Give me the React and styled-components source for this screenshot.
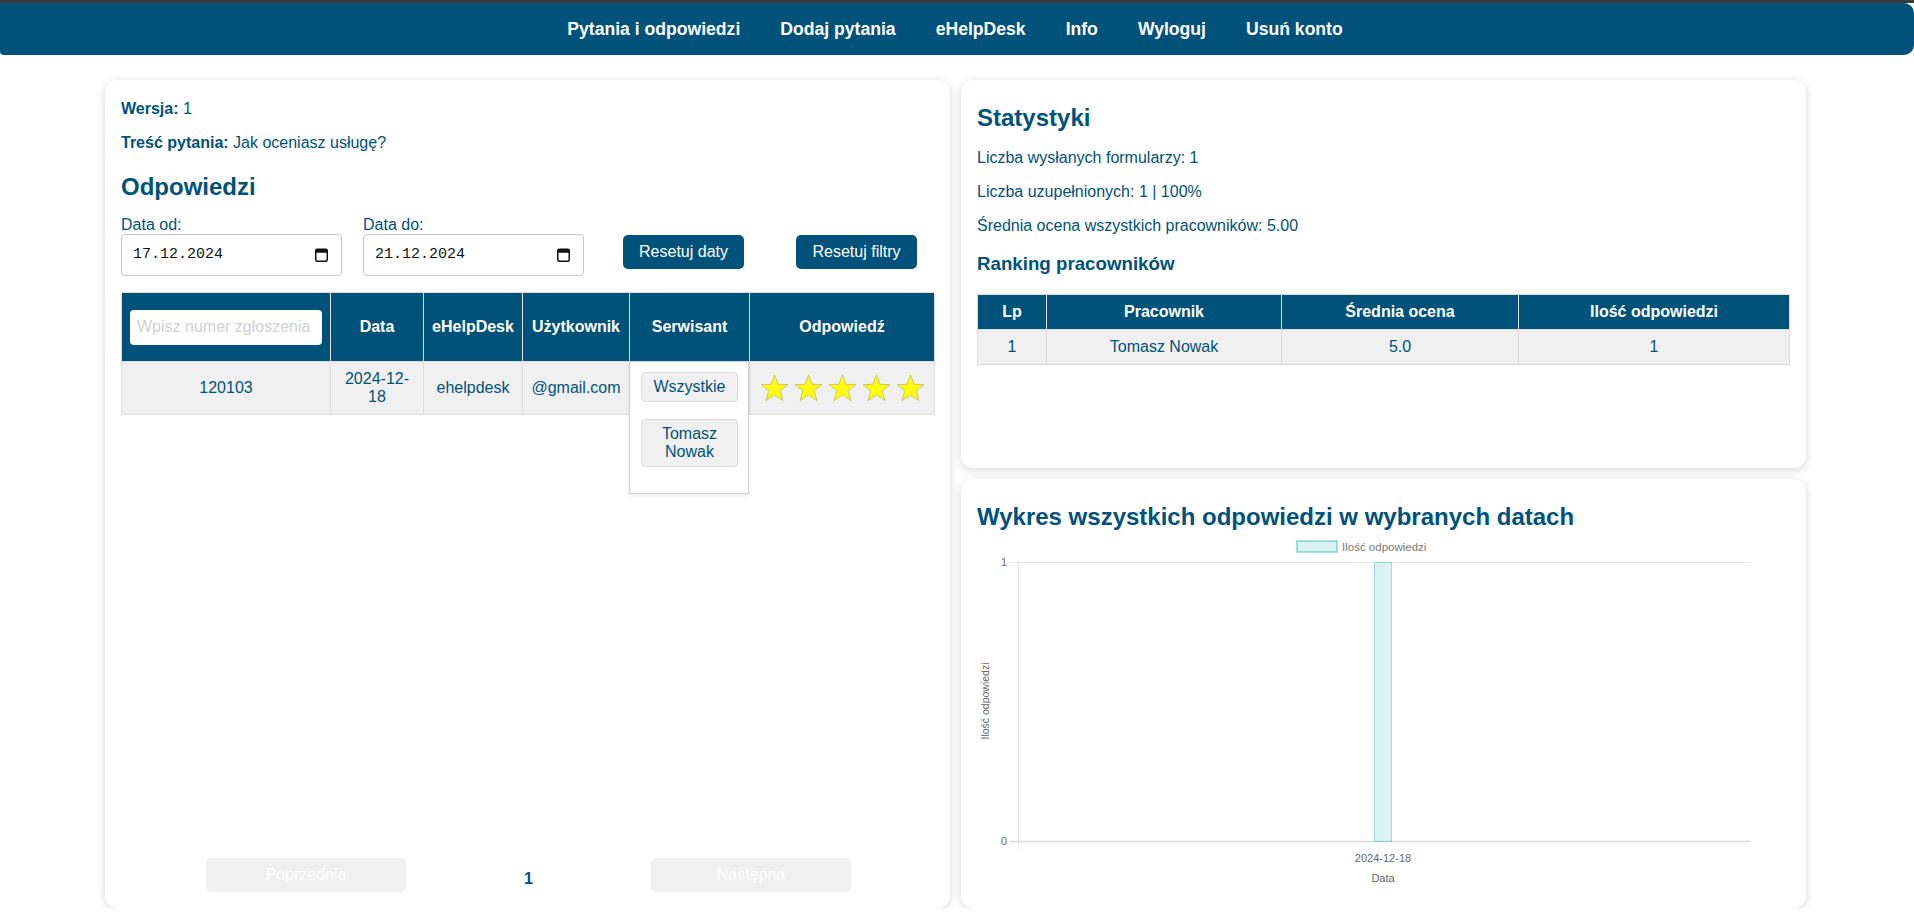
import React from "react";
import styled, { createGlobalStyle } from "styled-components";

const BLUE = "#00527a";

const GlobalStyle = createGlobalStyle`
  body {
    margin: 0;
    background: #fff;
    font-family: "Liberation Sans", Arial, sans-serif;
    color: ${BLUE};
  }
`;

const TopStrip = styled.div`
  height: 3px;
  background: #3b3b3b;
`;

const Nav = styled.nav`
  height: 52px;
  background: ${BLUE};
  border-radius: 0 10px 10px 4px;
  display: flex;
  align-items: center;
  justify-content: center;
  gap: 40px;
  padding-right: 4px;
`;

const NavItem = styled.a`
  color: #fff;
  font-size: 17.6px;
  font-weight: bold;
  text-decoration: none;
  cursor: pointer;
`;

const Main = styled.main`
  display: grid;
  grid-template-columns: 845px 845px;
  column-gap: 11px;
  margin: 25px 0 0 105px;
`;

const Card = styled.section`
  background: #fff;
  border-radius: 12px;
  box-shadow: 0 2px 8px rgba(0, 0, 0, 0.16);
  padding: ${(p) => p.$pad || "16px"};
  box-sizing: border-box;
  height: ${(p) => p.$h}px;
  display: flex;
  flex-direction: column;
`;

const RightCol = styled.div`
  display: flex;
  flex-direction: column;
  gap: 11px;
`;

const Line = styled.p`
  margin: ${(p) => p.$m || "0 0 16px"};
  font-size: 16px;
  line-height: 18px;
`;

const Title = styled.h2`
  font-size: 24px;
  margin: ${(p) => p.$m || "8px 0 17px"};
  line-height: 28px;
`;

const Sub = styled.h3`
  font-size: 18.72px;
  margin: 18px 0 19px;
  line-height: 22px;
`;

const FilterRow = styled.div`
  display: flex;
  align-items: flex-end;
  gap: 21px;
`;

const Field = styled.label`
  display: flex;
  flex-direction: column;
  font-size: 16px;
  line-height: 18px;
`;

const DateBox = styled.div`
  width: 221px;
  height: 42px;
  box-sizing: border-box;
  border: 1px solid #c8c8c8;
  border-radius: 4px;
  display: flex;
  align-items: center;
  justify-content: space-between;
  padding: 0 13px 0 11px;
  font-family: "Liberation Mono", "DejaVu Sans Mono", monospace;
  font-size: 15px;
  color: #111;
`;

const Btn = styled.button`
  background: ${BLUE};
  color: #fff;
  border: none;
  border-radius: 5px;
  height: 34px;
  width: 121px;
  font-family: inherit;
  font-size: 16px;
  margin: 0 0 7px ${(p) => p.$ml || 0}px;
  cursor: pointer;
`;

const Table = styled.table`
  border-collapse: collapse;
  table-layout: fixed;
  width: ${(p) => p.$w}px;
  margin-top: ${(p) => p.$mt || 0}px;
  font-size: 16px;
  text-align: center;
`;

const Th = styled.th`
  background: ${BLUE};
  color: #fff;
  border: 1px solid #ddd;
  height: ${(p) => p.$h}px;
  padding: 0 8px;
  box-sizing: border-box;
  position: relative;
  font-weight: bold;
`;

const Td = styled.td`
  background: #f0f0f0;
  border: 1px solid #ddd;
  height: ${(p) => p.$h}px;
  padding: 0 8px;
  box-sizing: border-box;
  line-height: 18px;
  color: ${BLUE};
`;

const Search = styled.input`
  width: 192px;
  height: 35px;
  box-sizing: border-box;
  border: none;
  border-radius: 4px;
  padding: 0 7px;
  font-family: inherit;
  font-size: 16px;
  display: block;
  &::placeholder {
    color: #d0d0d0;
  }
`;

const Dropdown = styled.div`
  position: absolute;
  top: 100%;
  left: -1px;
  width: 120px;
  box-sizing: border-box;
  background: #fff;
  border: 1px solid #d0d0d0;
  box-shadow: 0 2px 4px rgba(0, 0, 0, 0.08);
  padding: 10px 11px 26px;
  display: flex;
  flex-direction: column;
  gap: 17px;
  z-index: 5;
`;

const Option = styled.button`
  width: 97px;
  background: #f0f0f0;
  border: 1px solid #ddd;
  border-radius: 4px;
  padding: 5px 10px;
  font-family: inherit;
  font-size: 16px;
  line-height: 18px;
  color: ${BLUE};
  font-weight: normal;
`;

const Stars = styled.div`
  display: flex;
  gap: 5px;
  justify-content: center;
`;

const Pager = styled.div`
  margin-top: auto;
  display: flex;
  justify-content: center;
  align-items: center;
  gap: 118px;
  padding-left: 2px;
`;

const PageBtn = styled.button`
  width: 200px;
  height: 34px;
  background: #f0f0f0;
  color: #fff;
  border: none;
  border-radius: 5px;
  font-family: inherit;
  font-size: 16px;
`;

const PageNum = styled.span`
  font-weight: bold;
  font-size: 16px;
  margin-top: 8px;
`;

const Star = () => (
  <svg width="29" height="28" viewBox="0 0 29 28">
    <polygon
      points="14.5,1 18,10.3 28,10.6 20.2,16.8 23,26.6 14.5,21 6,26.6 8.8,16.8 1,10.6 11,10.3"
      fill="#ffff00"
      stroke="#c9c57a"
      strokeWidth="1"
    />
  </svg>
);

const CalendarIcon = () => (
  <svg width="13" height="14" viewBox="0 0 13 14">
    <rect x="0.75" y="1.25" width="11.5" height="12" rx="1.5" fill="none" stroke="#111" strokeWidth="1.5" />
    <rect x="0.75" y="1.25" width="11.5" height="3.5" fill="#111" />
  </svg>
);

const Chart = () => (
  <svg width="812" height="360" style={{ display: "block" }}>
    <rect x="320" y="6" width="40" height="11" fill="rgba(75,192,192,0.2)" stroke="rgba(75,192,192,0.5)" strokeWidth="2" />
    <text x="365" y="16" fontSize="11.5" fill="#777" fontFamily="Liberation Sans">Ilość odpowiedzi</text>
    <line x1="33" y1="27.5" x2="773" y2="27.5" stroke="#e6e6e6" />
    <line x1="41.5" y1="27" x2="41.5" y2="314" stroke="#e6e6e6" />
    <line x1="33" y1="306.5" x2="773" y2="306.5" stroke="#d8d8d8" strokeWidth="1.5" />
    <text x="30" y="31" fontSize="11" fill="#666" textAnchor="end" fontFamily="Liberation Sans">1</text>
    <text x="30" y="310" fontSize="11" fill="#666" textAnchor="end" fontFamily="Liberation Sans">0</text>
    <rect x="397.5" y="27.5" width="17" height="279" fill="rgba(75,192,192,0.2)" stroke="rgba(75,192,192,0.5)" />
    <text x="406" y="327" fontSize="11" fill="#666" textAnchor="middle" fontFamily="Liberation Sans">2024-12-18</text>
    <text x="406" y="347" fontSize="11" fill="#666" textAnchor="middle" fontFamily="Liberation Sans">Data</text>
    <text x="0" y="0" fontSize="10.5" fill="#666" textAnchor="middle" fontFamily="Liberation Sans" transform="translate(12 166) rotate(-90)">
      Ilość odpowiedzi
    </text>
  </svg>
);

const navItems = ["Pytania i odpowiedzi", "Dodaj pytania", "eHelpDesk", "Info", "Wyloguj", "Usuń konto"];

export default function App() {
  return (
    <>
      <GlobalStyle />
      <TopStrip />
      <Nav>
        {navItems.map((n) => (
          <NavItem key={n}>{n}</NavItem>
        ))}
      </Nav>
      <Main>
        <Card $h={828} $pad="20px 16px 16px">
          <Line>
            <b>Wersja:</b> 1
          </Line>
          <Line>
            <b>Treść pytania:</b> Jak oceniasz usługę?
          </Line>
          <Title $m="5px 0 15px">Odpowiedzi</Title>
          <FilterRow>
            <Field>
              Data od:
              <DateBox>
                17.12.2024
                <CalendarIcon />
              </DateBox>
            </Field>
            <Field>
              Data do:
              <DateBox>
                21.12.2024
                <CalendarIcon />
              </DateBox>
            </Field>
            <Btn $ml={18}>Resetuj daty</Btn>
            <Btn $ml={31}>Resetuj filtry</Btn>
          </FilterRow>
          <Table $w={813} $mt={16}>
            <colgroup>
              <col style={{ width: 209 }} />
              <col style={{ width: 93 }} />
              <col style={{ width: 99 }} />
              <col style={{ width: 107 }} />
              <col style={{ width: 120 }} />
              <col style={{ width: 185 }} />
            </colgroup>
            <thead>
              <tr>
                <Th $h={69}>
                  <Search placeholder="Wpisz numer zgłoszenia" />
                </Th>
                <Th $h={69}>Data</Th>
                <Th $h={69}>eHelpDesk</Th>
                <Th $h={69}>Użytkownik</Th>
                <Th $h={69}>
                  Serwisant
                  <Dropdown>
                    <Option>Wszystkie</Option>
                    <Option>Tomasz Nowak</Option>
                  </Dropdown>
                </Th>
                <Th $h={69}>Odpowiedź</Th>
              </tr>
            </thead>
            <tbody>
              <tr>
                <Td $h={53}>120103</Td>
                <Td $h={53}>2024-12-18</Td>
                <Td $h={53}>ehelpdesk</Td>
                <Td $h={53}>@gmail.com</Td>
                <Td $h={53}></Td>
                <Td $h={53}>
                  <Stars>
                    {[0, 1, 2, 3, 4].map((i) => (
                      <Star key={i} />
                    ))}
                  </Stars>
                </Td>
              </tr>
            </tbody>
          </Table>
          <Pager>
            <PageBtn>Poprzednia</PageBtn>
            <PageNum>1</PageNum>
            <PageBtn>Następna</PageBtn>
          </Pager>
        </Card>
        <RightCol>
          <Card $h={388}>
            <Title>Statystyki</Title>
            <Line>Liczba wysłanych formularzy: 1</Line>
            <Line>Liczba uzupełnionych: 1 | 100%</Line>
            <Line $m="0">Średnia ocena wszystkich pracowników: 5.00</Line>
            <Sub>Ranking pracowników</Sub>
            <Table $w={812}>
              <colgroup>
                <col style={{ width: 69 }} />
                <col style={{ width: 235 }} />
                <col style={{ width: 237 }} />
                <col style={{ width: 271 }} />
              </colgroup>
              <thead>
                <tr>
                  <Th $h={35}>Lp</Th>
                  <Th $h={35}>Pracownik</Th>
                  <Th $h={35}>Średnia ocena</Th>
                  <Th $h={35}>Ilość odpowiedzi</Th>
                </tr>
              </thead>
              <tbody>
                <tr>
                  <Td $h={35}>1</Td>
                  <Td $h={35}>Tomasz Nowak</Td>
                  <Td $h={35}>5.0</Td>
                  <Td $h={35}>1</Td>
                </tr>
              </tbody>
            </Table>
          </Card>
          <Card $h={429}>
            <Title $m="8px 0 4px">Wykres wszystkich odpowiedzi w wybranych datach</Title>
            <Chart />
          </Card>
        </RightCol>
      </Main>
    </>
  );
}
